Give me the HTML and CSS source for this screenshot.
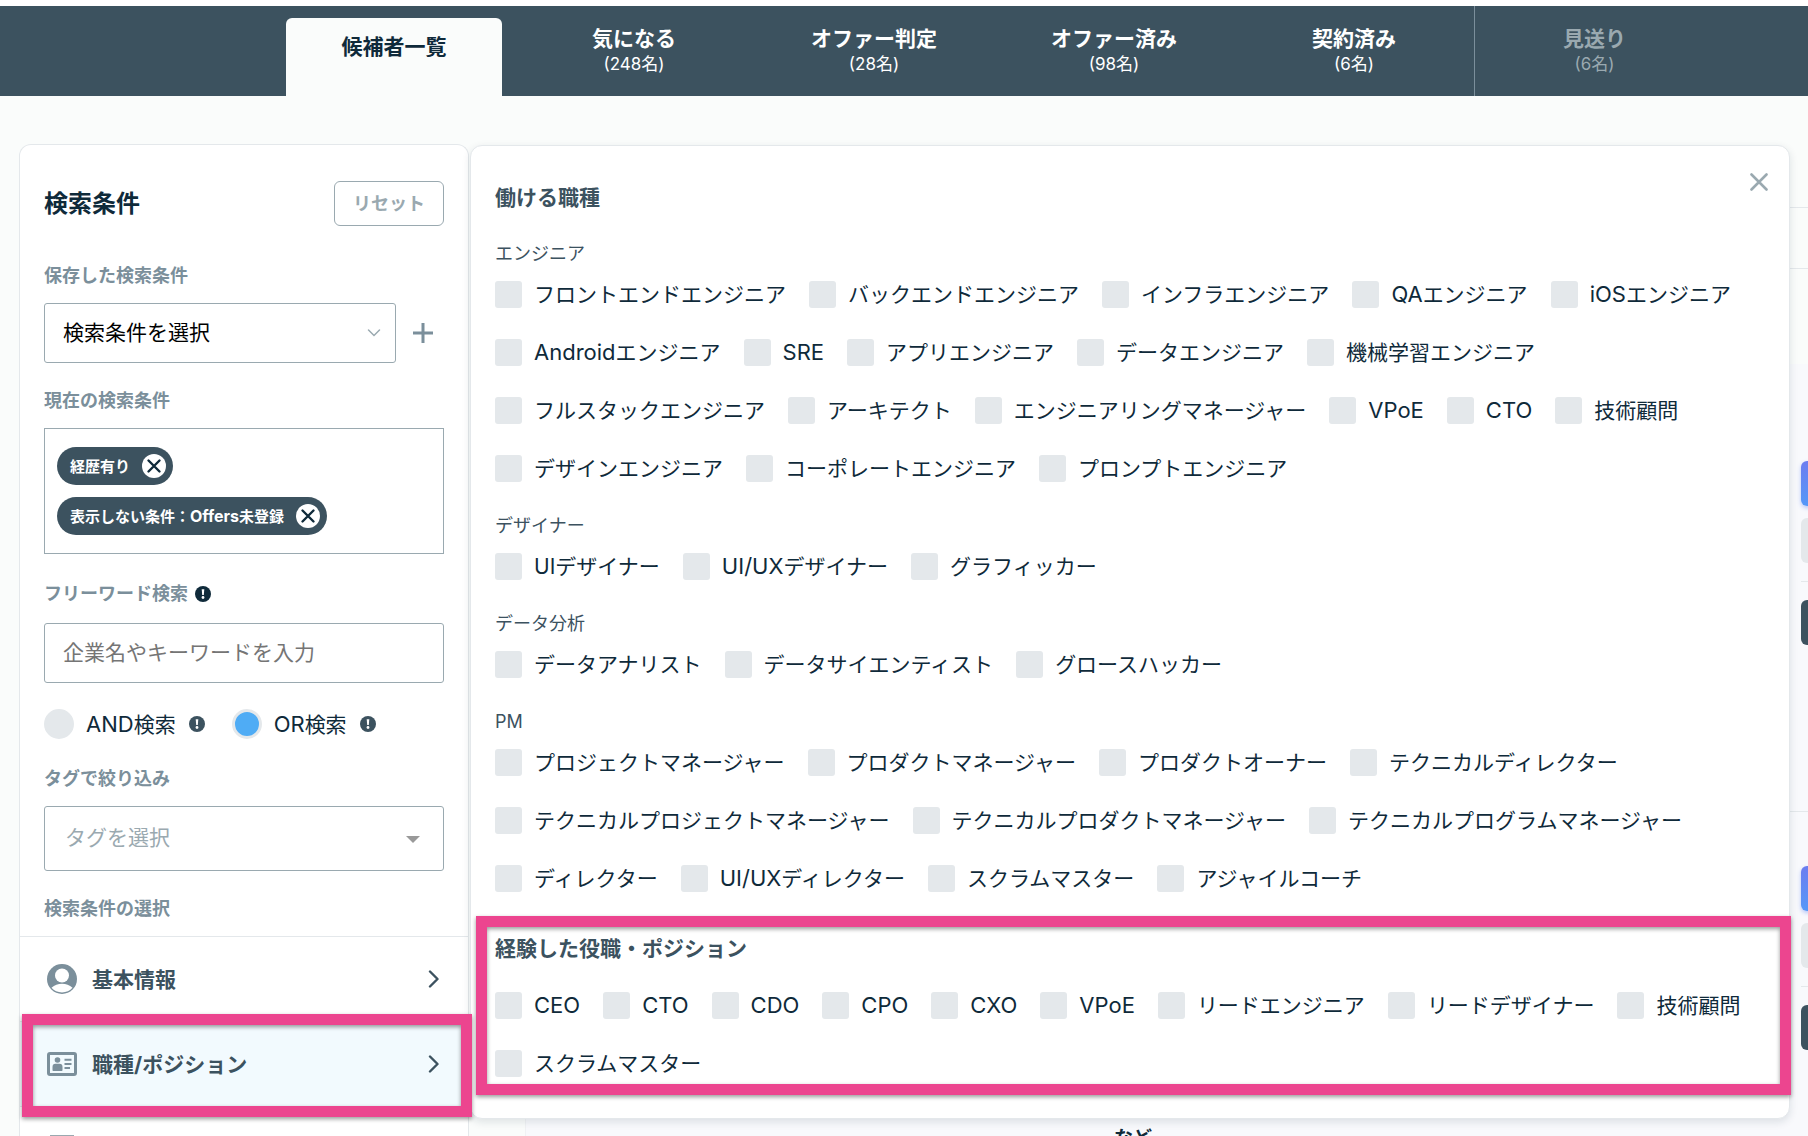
FILE: index.html
```html
<!DOCTYPE html>
<html lang="ja">
<head>
<meta charset="utf-8">
<title>候補者一覧</title>
<link rel="stylesheet" href="styles.css">
</head>
<body>
<svg width="0" height="0" class="sprite" aria-hidden="true">
  <symbol id="info" viewBox="0 0 16 16"><circle cx="8" cy="8" r="8" fill="currentColor"/><path d="M6.700 3.200h2.600l-.5 5.800h-1.600z" fill="#fff"/><circle cx="8" cy="11.500" r="1.400" fill="#fff"/></symbol>
  <symbol id="remove" viewBox="0 0 24 24"><circle cx="12" cy="12" r="12" fill="#fff"/><path d="M6.500 6.500l11 11M17.500 6.500l-11 11" stroke="#0f2a3a" stroke-width="2.400" stroke-linecap="round"/></symbol>
  <symbol id="next" viewBox="0 0 12 18"><path d="M2 1.500l7.500 7.500L2 16.500" fill="none" stroke="#3c525f" stroke-width="2.400" stroke-linecap="round" stroke-linejoin="round"/></symbol>
</svg>

<nav class="tabs">
  <a class="tab tab-active" href="#list"><span class="tab-name">候補者一覧</span></a>
  <a class="tab" href="#liked"><span class="tab-name">気になる</span><span class="tab-count">(248名)</span></a>
  <a class="tab" href="#judging"><span class="tab-name">オファー判定</span><span class="tab-count">(28名)</span></a>
  <a class="tab" href="#offered"><span class="tab-name">オファー済み</span><span class="tab-count">(98名)</span></a>
  <a class="tab" href="#contracted"><span class="tab-name">契約済み</span><span class="tab-count">(6名)</span></a>
  <a class="tab tab-passed" href="#passed"><span class="tab-name">見送り</span><span class="tab-count">(6名)</span></a>
</nav>

<div class="workspace">
  <aside class="sidebar">
    <form class="search">
      <div class="search-head">
        <h1>検索条件</h1>
        <button class="reset" type="reset">リセット</button>
      </div>

      <label class="field-label" for="saved">保存した検索条件</label>
      <div class="saved-row">
        <div class="select-wrap">
          <select id="saved" class="box saved-select"><option>検索条件を選択</option></select>
          <svg class="select-arrow" width="14" height="10" viewBox="0 0 14 10"><path d="M1.500 2l5.500 5.500L12.500 2" fill="none" stroke="#9aa9b0" stroke-width="1.500" stroke-linecap="round"/></svg>
        </div>
        <button class="add" type="button" aria-label="追加"><svg width="20" height="20" viewBox="0 0 20 20"><path d="M10 0v20M0 10h20" stroke="#7b8f9b" stroke-width="3"/></svg></button>
      </div>

      <h2 class="field-label">現在の検索条件</h2>
      <div class="chips">
        <span class="chip">経歴有り<button type="button" aria-label="削除"><svg width="24" height="24"><use href="#remove"/></svg></button></span>
        <span class="chip"><span>表示しない条件：<span class="chip-latin">Offers</span>未登録</span><button type="button" aria-label="削除"><svg width="24" height="24"><use href="#remove"/></svg></button></span>
      </div>

      <div class="label-row">
        <label class="field-label" for="keyword">フリーワード検索</label>
        <svg class="info-dark" width="16" height="16"><use href="#info"/></svg>
      </div>
      <input id="keyword" class="box keyword" type="text" placeholder="企業名やキーワードを入力">

      <div class="modes">
        <label class="mode"><input type="radio" name="mode"><span><span class="latin">AND</span>検索</span><svg class="info" width="16" height="16"><use href="#info"/></svg></label>
        <label class="mode"><input type="radio" name="mode" checked><span><span class="latin">OR</span>検索</span><svg class="info" width="16" height="16"><use href="#info"/></svg></label>
      </div>

      <label class="field-label" for="tag">タグで絞り込み</label>
      <div class="select-wrap">
        <select id="tag" class="box tag-select"><option>タグを選択</option></select>
        <svg class="tag-arrow" width="14" height="7" viewBox="0 0 14 7"><path d="M0 0h14L7 7z" fill="#999"/></svg>
      </div>

      <h2 class="field-label">検索条件の選択</h2>
    </form>

    <ul class="menu">
      <li><button class="menu-item" type="button">
        <svg width="30" height="30" viewBox="0 0 30 30"><circle cx="15" cy="15" r="15" fill="#7b8f9b"/><circle cx="15" cy="11.500" r="7" fill="#fff"/><path d="M4.500 23.800C7.500 21 11 19.800 15 19.800s7.500 1.200 10.500 4C23 26.800 19.200 28.400 15 28.400S7 26.800 4.500 23.800z" fill="#fff"/></svg>
        <span>基本情報</span>
        <svg width="12" height="18"><use href="#next"/></svg>
      </button></li>
      <li class="menu-current"><button class="menu-item" type="button">
        <svg width="30" height="24" viewBox="0 0 30 24"><rect x="1.500" y="1.500" width="27" height="21" rx="1.500" fill="none" stroke="#7b8f9b" stroke-width="3"/><circle cx="10.500" cy="8" r="2.800" fill="#7b8f9b"/><path d="M5.500 18v-3c0-2 1-3.200 3-3.200h4c2 0 3 1.200 3 3.200v3c0 .6-.4 1-1 1h-8c-.6 0-1-.4-1-1z" fill="#7b8f9b"/><path d="M17.500 7.800h7M17.500 12h7M17.500 16h5.500" stroke="#7b8f9b" stroke-width="2"/></svg>
        <span>職種/ポジション</span>
        <svg width="12" height="18"><use href="#next"/></svg>
      </button><div class="marker marker-menu"></div></li>
      <li><button class="menu-item" type="button" aria-label="経歴">
        <svg width="30" height="28" viewBox="0 0 30 28"><rect x="4" y="1" width="22" height="26" fill="none" stroke="#9aa9b0" stroke-width="2"/></svg>
      </button></li>
    </ul>
  </aside>

  <main class="results">
    <div class="results-head"></div>
    <div class="results-bar"></div>
    <div class="candidates">
      <article class="candidate">
        <div class="actions"><span class="act act-offer"></span><span class="act act-like"></span><hr><span class="act act-pass"></span></div>
      </article>
      <article class="candidate">
        <p class="summary">など</p>
        <div class="actions"><span class="act act-offer"></span><span class="act act-like"></span><hr><span class="act act-pass"></span></div>
      </article>
    </div>
  </main>

  <section class="panel">
    <button class="close" type="button" aria-label="閉じる"><svg width="18" height="18" viewBox="0 0 18 18"><path d="M1.500 1.500l15 15M16.500 1.500l-15 15" stroke="#9aa9b0" stroke-width="2.600" stroke-linecap="round"/></svg></button>
    <div class="jobs">
      <h2>働ける職種</h2>
      <h3>エンジニア</h3>
      <div class="options">
        <label><input type="checkbox">フロントエンドエンジニア</label>
        <label><input type="checkbox">バックエンドエンジニア</label>
        <label><input type="checkbox">インフラエンジニア</label>
        <label><input type="checkbox"><span><span class="latin">QA</span>エンジニア</span></label>
        <label><input type="checkbox"><span><span class="latin">iOS</span>エンジニア</span></label>
        <label><input type="checkbox"><span><span class="latin">Android</span>エンジニア</span></label>
        <label><input type="checkbox"><span class="latin">SRE</span></label>
        <label><input type="checkbox">アプリエンジニア</label>
        <label><input type="checkbox">データエンジニア</label>
        <label><input type="checkbox">機械学習エンジニア</label>
        <label><input type="checkbox">フルスタックエンジニア</label>
        <label><input type="checkbox">アーキテクト</label>
        <label><input type="checkbox">エンジニアリングマネージャー</label>
        <label><input type="checkbox"><span class="latin">VPoE</span></label>
        <label><input type="checkbox"><span class="latin">CTO</span></label>
        <label><input type="checkbox">技術顧問</label>
        <label><input type="checkbox">デザインエンジニア</label>
        <label><input type="checkbox">コーポレートエンジニア</label>
        <label><input type="checkbox">プロンプトエンジニア</label>
      </div>
      <h3>デザイナー</h3>
      <div class="options">
        <label><input type="checkbox">UIデザイナー</label>
        <label><input type="checkbox"><span><span class="latin">UI/UX</span>デザイナー</span></label>
        <label><input type="checkbox">グラフィッカー</label>
      </div>
      <h3>データ分析</h3>
      <div class="options">
        <label><input type="checkbox">データアナリスト</label>
        <label><input type="checkbox">データサイエンティスト</label>
        <label><input type="checkbox">グロースハッカー</label>
      </div>
      <h3>PM</h3>
      <div class="options">
        <label><input type="checkbox">プロジェクトマネージャー</label>
        <label><input type="checkbox">プロダクトマネージャー</label>
        <label><input type="checkbox">プロダクトオーナー</label>
        <label><input type="checkbox">テクニカルディレクター</label>
        <label><input type="checkbox">テクニカルプロジェクトマネージャー</label>
        <label><input type="checkbox">テクニカルプロダクトマネージャー</label>
        <label><input type="checkbox">テクニカルプログラムマネージャー</label>
        <label><input type="checkbox">ディレクター</label>
        <label><input type="checkbox"><span><span class="latin">UI/UX</span>ディレクター</span></label>
        <label><input type="checkbox">スクラムマスター</label>
        <label><input type="checkbox">アジャイルコーチ</label>
      </div>
    </div>
    <div class="roles">
      <h2>経験した役職・ポジション</h2>
      <div class="options">
        <label><input type="checkbox"><span class="latin">CEO</span></label>
        <label><input type="checkbox"><span class="latin">CTO</span></label>
        <label><input type="checkbox"><span class="latin">CDO</span></label>
        <label><input type="checkbox"><span class="latin">CPO</span></label>
        <label><input type="checkbox"><span class="latin">CXO</span></label>
        <label><input type="checkbox"><span class="latin">VPoE</span></label>
        <label><input type="checkbox">リードエンジニア</label>
        <label><input type="checkbox">リードデザイナー</label>
        <label><input type="checkbox">技術顧問</label>
        <label><input type="checkbox">スクラムマスター</label>
      </div>
      <div class="marker marker-roles"></div>
    </div>
  </section>
</div>
</body>
</html>
```

FILE: styles.css
```css
:root {
  --ink: #0f2a3a;
  --slate: #3c525f;
  --muted: #7b8f9b;
  --pale: #9aa9b0;
  --line: #e4e8eb;
  --pink: #ec458f;
}

* { box-sizing: border-box; }

body {
  margin: 0;
  padding-top: 6px;
  height: 100vh;
  overflow: hidden;
  display: flex;
  flex-direction: column;
  background: #fff;
  color: var(--ink);
  font-family: Inter, "Noto Sans CJK JP", sans-serif;
  font-size: 21px;
  line-height: 27px;
}

button, input, select { font: inherit; color: inherit; }
button { padding: 0; border: 0; background: none; cursor: pointer; }
h1, h2, h3, p, ul { margin: 0; padding: 0; }
svg { display: block; flex: none; }
.sprite { position: absolute; }
.latin { font-size: 22px; }

/* Status tabs */
.tabs {
  display: grid;
  grid-template-columns: repeat(6, 1fr);
  flex: none;
  height: 90px;
  padding: 0 94px 0 274px;
  background: var(--slate);
}
.tab {
  display: flex;
  flex-direction: column;
  align-items: center;
  padding-top: 18px;
  color: #fff;
  text-decoration: none;
}
.tab-name { font-weight: 700; line-height: 30px; }
.tab-count { font-size: 17px; line-height: 20px; }
.tab-active {
  margin: 12px 12px 0;
  padding-top: 14px;
  border-radius: 6px 6px 0 0;
  background: #fafcfb;
  color: var(--ink);
}
.tab-passed { border-left: 1px solid var(--muted); color: var(--pale); }

/* Page body */
.workspace {
  position: relative;
  flex: 1;
  display: flex;
  min-height: 0;
  padding-left: 19px;
  background: #fafcfb;
}

/* Search sidebar */
.sidebar {
  flex: none;
  width: 450px;
  margin-top: 48px;
  border: 1px solid var(--line);
  border-bottom: 0;
  border-radius: 12px 12px 0 0;
  background: #fff;
}
.search { padding: 36px 24px 14px; }
.search-head {
  display: flex;
  align-items: center;
  justify-content: space-between;
  margin-bottom: 36px;
}
.search-head h1 { font-size: 24px; line-height: 36px; }
.reset {
  width: 110px;
  height: 45px;
  border: 1px solid var(--pale);
  border-radius: 6px;
  color: var(--pale);
  font-size: 18px;
  font-weight: 700;
}
.field-label {
  display: block;
  color: var(--muted);
  font-size: 18px;
  font-weight: 700;
  line-height: 27px;
}
.box {
  display: block;
  width: 100%;
  height: 60px;
  padding: 0 18px 2px;
  border: 1px solid var(--pale);
  border-radius: 3px;
  background: #fff;
  appearance: none;
}
.saved-row { display: flex; align-items: center; gap: 17px; margin: 14px 0 24px; }
.saved-row .select-wrap { width: 352px; }
.select-wrap { position: relative; }
.saved-select { color: #000; }
.select-arrow { position: absolute; right: 15px; top: 25px; }
.chips {
  display: flex;
  flex-direction: column;
  align-items: flex-start;
  gap: 12px;
  margin: 14px 0 24px;
  padding: 18px 12px;
  border: 1px solid var(--pale);
}
.chip {
  display: flex;
  align-items: center;
  gap: 12px;
  height: 38px;
  padding: 0 7px 0 13px;
  border-radius: 19px;
  background: var(--slate);
  color: #fff;
  font-size: 15px;
  font-weight: 700;
}
.chip-latin { font-size: 16px; }
.label-row { display: flex; align-items: center; gap: 7px; height: 31px; }
.info-dark { color: var(--ink); }
.keyword { margin: 14px 0 26px; }
.keyword::placeholder { color: #757575; opacity: 1; }
.modes { display: flex; gap: 27px; margin-bottom: 26px; }
.mode { display: flex; align-items: center; height: 30px; }
.mode input {
  appearance: none;
  width: 30px;
  height: 30px;
  margin: 0 12px 0 0;
  border: 3px solid var(--line);
  border-radius: 50%;
  background: var(--line);
}
.mode input:checked { background: #4facf5; }
.info { margin-left: 13px; color: var(--slate); }
.tag-select {
  height: 65px;
  margin: 14px 0 24px;
  padding: 0 20px 2px;
  color: var(--pale);
}
.tag-arrow { position: absolute; right: 24px; top: 30px; }

.menu { list-style: none; }
.menu li { position: relative; border-top: 1px solid var(--line); }
.menu-item {
  display: flex;
  align-items: center;
  width: 100%;
  height: 84px;
  padding: 0 28px 0 27px;
  color: var(--slate);
  font-weight: 700;
  text-align: left;
}
.menu-item span { flex: 1; margin-left: 15px; }
.menu-current { z-index: 2; background: #f2fafe; }

/* Highlight frames */
.marker {
  position: absolute;
  border: 11px solid var(--pink);
  filter: drop-shadow(0 2px 2px rgba(0, 0, 0, .4));
  pointer-events: none;
}
.marker-menu { inset: -8px -4px -11px 2px; }
.marker-roles { inset: -18px -25px -18px -19px; }

/* Candidate list behind the panel */
.results { flex: 1; margin-left: 56px; overflow: hidden; }
.results-head { height: 112px; border-bottom: 1px solid var(--line); }
.results-bar { height: 61px; border-bottom: 1px solid var(--line); }
.candidates {
  margin-top: 95px;
  padding-top: 42px;
  border-left: 1px solid #f0f2f4;
  background: #f8f9fc;
}
.candidate {
  display: flex;
  justify-content: flex-end;
  height: 405px;
  border-top: 1px solid transparent;
}
.candidate + .candidate { border-color: var(--line); }
.actions {
  display: flex;
  flex: none;
  flex-direction: column;
  width: 110px;
  margin: 54px -103px 0 0;
}
.act { height: 45px; border-radius: 6px; }
.act-offer { background: linear-gradient(#6c7df0, #5598f8); box-shadow: 0 2px 4px rgba(85, 120, 240, .4); }
.act-like { margin-top: 12px; background: var(--line); }
.actions hr { width: 100%; height: 1px; margin: 18px 0; border: 0; background: var(--line); }
.act-pass { background: var(--slate); }
.summary { flex: 1; padding: 313px 0 0 588px; font-size: 19px; font-weight: 700; }

/* Job and position panel */
.panel {
  position: absolute;
  left: 470px;
  right: 18px;
  top: 49px;
  z-index: 1;
  padding: 37px 23px 41px 24px;
  border: 1px solid var(--line);
  border-radius: 12px;
  background: #fff;
  box-shadow: 0 3px 8px rgba(15, 42, 58, .12);
}
.close { position: absolute; right: 21px; top: 27px; }
.panel h2 { color: var(--slate); font-size: 21px; line-height: 30px; }
.panel h3 {
  margin: 31px 0 14px;
  color: var(--slate);
  font-size: 18px;
  font-weight: 400;
  line-height: 26px;
}
.panel h2 + h3 { margin-top: 28px; }
.options { display: flex; flex-wrap: wrap; gap: 31px 23px; }
.options label { display: flex; align-items: center; gap: 12px; height: 27px; white-space: nowrap; }
.options input {
  appearance: none;
  width: 27px;
  height: 27px;
  margin: 0;
  border-radius: 3px;
  background: var(--line);
}
.roles { position: relative; margin-top: 42px; }
.roles .options { margin-top: 28px; }
```
